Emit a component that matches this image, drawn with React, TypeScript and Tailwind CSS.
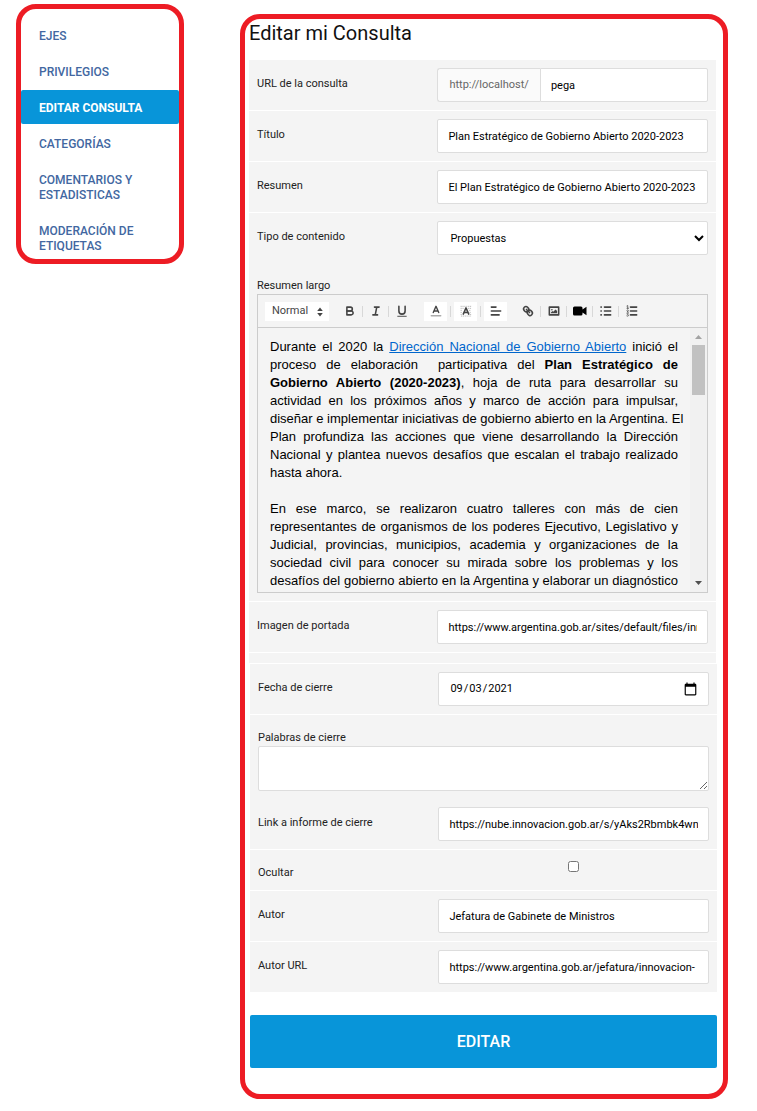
import { useState } from "react";
import type { ReactNode } from "react";

const navItems = [
  "Ejes",
  "Privilegios",
  "Editar consulta",
  "Categorías",
  "Comentarios y estadisticas",
  "Moderación de etiquetas",
];

const fieldClass =
  "block h-[34px] w-full min-w-0 rounded-[2px] border border-[#dddddd] bg-white px-[10px] text-[11px] text-black";

function Sidebar() {
  return (
    <aside className="mt-1 w-[168px] shrink-0 rounded-[20px] border-[5px] border-[#ed1c24] pt-[9px]">
      <nav className="flex flex-col gap-[2px]">
        {navItems.map((item) => (
          <a
            key={item}
            href="#"
            className={
              item === "Editar consulta"
                ? "rounded-[2px] bg-[#0895d9] pt-[11px] pr-5 pb-2 pl-[18px] text-[12px] leading-[15px] font-bold text-white uppercase"
                : "pt-[11px] pr-5 pb-2 pl-[18px] text-[12px] leading-[15px] font-medium text-[#4267a1] uppercase last:pb-[5px]"
            }
          >
            {item}
          </a>
        ))}
      </nav>
    </aside>
  );
}

function Row({
  id,
  label,
  last = false,
  children,
}: {
  id: string;
  label: string;
  last?: boolean;
  children: ReactNode;
}) {
  return (
    <div
      className={
        last
          ? "grid grid-cols-[2fr_3fr] px-2"
          : "grid grid-cols-[2fr_3fr] border-b border-white px-2"
      }
    >
      <label htmlFor={id} className="pt-4 leading-4">
        {label}
      </label>
      <div className="min-w-0 py-2">{children}</div>
    </div>
  );
}

function TextRow({ id, label, value, last }: { id: string; label: string; value: string; last?: boolean }) {
  return (
    <Row id={id} label={label} last={last}>
      <input id={id} type="text" defaultValue={value} className={fieldClass} />
    </Row>
  );
}

function Icon({ children }: { children: ReactNode }) {
  return (
    <svg
      viewBox="0 0 18 18"
      className="size-[14px]"
      fill="none"
      stroke="#444444"
      strokeWidth="2"
      strokeLinecap="round"
      strokeLinejoin="round"
      aria-hidden="true"
    >
      {children}
    </svg>
  );
}

function Tool({ label, children }: { label: string; children: ReactNode }) {
  return (
    <button type="button" aria-label={label} className="flex h-5 w-[25px] items-center justify-center">
      {children}
    </button>
  );
}

function PickerTool({ label, children }: { label: string; children: ReactNode }) {
  return (
    <button
      type="button"
      aria-label={label}
      className="flex h-[19px] w-[23px] items-center justify-center bg-white"
    >
      {children}
    </button>
  );
}

function Divider() {
  return <span className="h-[11px] w-px bg-[#d8d8d8]" />;
}

function Toolbar() {
  return (
    <div className="flex h-[33px] items-center overflow-hidden border-b border-[#cccccc] pl-[7px]">
      <button
        type="button"
        className="flex h-[19px] w-16 items-center justify-between bg-white pt-px pr-[5px] pl-[7px] text-[11px] text-[#444444]"
      >
        Normal
        <svg viewBox="0 0 8 10" className="h-[10px] w-2" fill="#444444" aria-hidden="true">
          <path d="M4 0.5 6.8 4H1.2ZM4 9.5 1.2 6h5.6Z" />
        </svg>
      </button>
      <div className="ml-2 flex items-center">
        <Tool label="Negrita">
          <Icon>
            <path d="M5,4H9.5A2.5,2.5,0,0,1,12,6.5v0A2.5,2.5,0,0,1,9.5,9H5V4Z" />
            <path d="M5,9h5.5A2.5,2.5,0,0,1,13,11.5v0A2.5,2.5,0,0,1,10.5,14H5V9Z" />
          </Icon>
        </Tool>
        <Divider />
        <Tool label="Cursiva">
          <Icon>
            <path d="M7,4h6M5,14h6M8,14L10,4" />
          </Icon>
        </Tool>
        <Divider />
        <Tool label="Subrayado">
          <Icon>
            <path d="M5,3V9a4.012,4.012,0,0,0,4,4H9a4.012,4.012,0,0,0,4-4V3" />
            <path d="M3.5,15.8h11" strokeWidth="1.2" />
          </Icon>
        </Tool>
      </div>
      <div className="ml-[10px] flex items-center gap-[3px]">
        <PickerTool label="Color de texto">
          <Icon>
            <path d="M3,15h12" opacity="0.45" />
            <path d="M5.5,11L9,3L12.5,11M6.4,9h5.2" strokeWidth="1.8" />
          </Icon>
        </PickerTool>
        <Divider />
        <PickerTool label="Color de fondo">
          <Icon>
            <path
              d="M2.5,3h13M2.5,5.6h3.5M12,5.6h3.5M2.5,8.2h2M13.5,8.2h2M2.5,10.8h1.5M14,10.8h1.5M2.5,13.4h1M14.5,13.4h1M3,15.5h12"
              strokeWidth="1"
              strokeDasharray="0.6 1.8"
              opacity="0.45"
            />
            <path d="M5.5,13L9,5L12.5,13M6.4,11h5.2" />
          </Icon>
        </PickerTool>
        <Divider />
        <PickerTool label="Alineación">
          <Icon>
            <path d="M3,9H15M3,14H13M3,4H9" />
          </Icon>
        </PickerTool>
      </div>
      <div className="ml-2 flex items-center">
        <Tool label="Enlace">
          <Icon>
            <path d="M7,7L11,11" />
            <path d="M8.9,4.577a3.476,3.476,0,0,1,.36,4.679A3.476,3.476,0,0,1,4.577,8.9C3.185,7.5,2.035,6.4,4.217,4.217S7.5,3.185,8.9,4.577Z" />
            <path d="M13.423,9.1a3.476,3.476,0,0,0-4.679-.36,3.476,3.476,0,0,0,.36,4.679c1.392,1.392,2.5,2.542,4.679.36S14.815,10.5,13.423,9.1Z" />
          </Icon>
        </Tool>
        <Divider />
        <Tool label="Imagen">
          <Icon>
            <rect x="3" y="4" width="12" height="10" />
            <circle cx="6.3" cy="7.3" r="1" fill="#444444" stroke="none" />
            <path d="M5,12V11L7,9L8,10L11,7L13,9V12Z" fill="#444444" stroke="none" />
          </Icon>
        </Tool>
        <Divider />
        <Tool label="Video">
          <svg viewBox="0 0 14 10" className="h-[10px] w-[14px]" fill="#000000" aria-hidden="true">
            <path d="M1.5,0.5H8A1.5,1.5,0,0,1,9.5,2V3.6L13.5,0.8V9.2L9.5,6.4V8A1.5,1.5,0,0,1,8,9.5H1.5A1.5,1.5,0,0,1,0,8V2A1.5,1.5,0,0,1,1.5,0.5Z" />
          </svg>
        </Tool>
        <Divider />
        <Tool label="Lista">
          <Icon>
            <path d="M7,4H15M7,9H15M7,14H15M2.5,4H3M2.5,9H3M2.5,14H3" />
          </Icon>
        </Tool>
        <Divider />
        <Tool label="Lista numerada">
          <Icon>
            <path d="M7,4H15M7,9H15M7,14H15" />
            <path
              d="M2.5,2.5L3.5,2V5.5M2.5,5.5H4.5M2.4,8Q3.5,7 4.3,8Q4.3,8.8 2.5,10.5H4.5M2.5,12.5H4.3L3.4,13.8Q4.6,14 4.3,15.2Q3.5,16 2.4,15.4"
              strokeWidth="1"
            />
          </Icon>
        </Tool>
      </div>
    </div>
  );
}

function Editor() {
  return (
    <div className="h-[299px] overflow-hidden border border-[#cccccc]">
      <Toolbar />
      <div className="flex h-[264px]">
        <div
          role="textbox"
          aria-multiline="true"
          aria-labelledby="resumen-largo"
          className="min-w-0 flex-1 overflow-hidden px-3 pt-[10px] text-justify font-['Liberation_Sans',Arial,sans-serif] text-[13px] leading-[18px] text-black"
        >
          <p className="mb-[18px] whitespace-pre-wrap">
            Durante el 2020 la{" "}
            <a href="#" className="text-[#0066cc] underline">
              Dirección Nacional de Gobierno Abierto
            </a>
            {" inició el proceso de elaboración  participativa del "}
            <strong>Plan Estratégico de Gobierno Abierto (2020-2023)</strong>, hoja de ruta para desarrollar su
            actividad en los próximos años y marco de acción para impulsar,{" "}
            <span className="whitespace-nowrap">
              diseñar e implementar iniciativas de gobierno abierto en la Argentina. El
            </span>{" "}
            Plan profundiza las acciones que viene desarrollando la Dirección Nacional y plantea nuevos desafíos que
            escalan el trabajo realizado hasta ahora.
          </p>
          <p className="[text-align-last:justify]">
            En ese marco, se realizaron cuatro talleres con más de cien representantes de organismos de los poderes
            Ejecutivo, Legislativo y Judicial, provincias, municipios, academia y organizaciones de la sociedad civil
            para conocer su mirada sobre los problemas y los desafíos del gobierno abierto en la Argentina y elaborar
            un diagnóstico
          </p>
        </div>
        <div className="flex w-[17px] flex-col items-center bg-[#f1f1f1]" aria-hidden="true">
          <svg viewBox="0 0 17 17" className="size-[17px] shrink-0" fill="#a3a3a3">
            <path d="M8.5 7 12 11H5Z" />
          </svg>
          <div className="h-[50px] w-[13px] bg-[#c1c1c1]" />
          <svg viewBox="0 0 17 17" className="mt-auto size-[17px] shrink-0" fill="#505050">
            <path d="M8.5 10 5 6h7Z" />
          </svg>
        </div>
      </div>
    </div>
  );
}

export default function App() {
  const [hidden, setHidden] = useState(false);

  return (
    <div className="flex items-start gap-14 bg-white pr-[29px] pb-3 pl-4 font-[Roboto,sans-serif] text-[11px] text-[#222222]">
      <Sidebar />
      <main className="mt-[14px] min-w-0 flex-1 rounded-[20px] border-[5px] border-[#ed1c24] pb-[26px]">
        <h1 className="h-[41px] pl-1 text-[20px] leading-7 text-[#111111]">Editar mi Consulta</h1>
        <form onSubmit={(e) => e.preventDefault()}>
          <div className="mr-[7px] ml-1 bg-[#f4f4f4]">
            <Row id="url" label="URL de la consulta">
              <div className="flex">
                <span className="flex h-[34px] shrink-0 items-center rounded-l-[3px] border border-r-0 border-[#dddddd] bg-[#fafafa] px-[11px] text-[#666666]">
                  http://localhost/
                </span>
                <input
                  id="url"
                  type="text"
                  defaultValue="pega"
                  className="h-[34px] min-w-0 flex-1 rounded-r-[2px] border border-[#dddddd] bg-white px-[10px] text-[11px] text-black"
                />
              </div>
            </Row>
            <TextRow id="titulo" label="Título" value="Plan Estratégico de Gobierno Abierto 2020-2023" />
            <TextRow
              id="resumen"
              label="Resumen"
              value="El Plan Estratégico de Gobierno Abierto 2020-2023"
            />
            <Row id="tipo" label="Tipo de contenido" last>
              <select
                id="tipo"
                className="block h-[34px] w-full rounded-[2px] border border-[#dddddd] bg-white pr-[2px] pl-2 text-[11px] text-black"
              >
                <option>Propuestas</option>
              </select>
            </Row>
            <div className="border-b border-white px-2 pt-[15px] pb-2">
              <span id="resumen-largo" className="block leading-4">
                Resumen largo
              </span>
              <Editor />
            </div>
            <TextRow
              id="imagen"
              label="Imagen de portada"
              value="https://www.argentina.gob.ar/sites/default/files/innovacion.jpg"
            />
            <div className="h-[11px] border-b border-white" />
          </div>
          <div className="mr-[6px] ml-[5px] bg-[#f4f4f4]">
            <Row id="fecha" label="Fecha de cierre">
              <input
                id="fecha"
                type="date"
                defaultValue="2021-09-03"
                className="block h-[34px] w-full min-w-0 rounded-[2px] border border-[#dddddd] bg-white px-[10px] text-[11px] text-black [&::-webkit-calendar-picker-indicator]:size-[15px] [&::-webkit-calendar-picker-indicator]:bg-contain [&::-webkit-calendar-picker-indicator]:p-0"
              />
            </Row>
            <div className="px-2 pt-[15px] pb-2">
              <label htmlFor="palabras" className="block leading-4">
                Palabras de cierre
              </label>
              <textarea
                id="palabras"
                className="block h-[45px] w-full resize rounded-[2px] border border-[#dddddd] bg-white px-[10px] py-2 text-[11px] text-black"
              />
            </div>
            <TextRow
              id="informe"
              label="Link a informe de cierre"
              value="https://nube.innovacion.gob.ar/s/yAks2Rbmbk4wn"
            />
            <div className="grid h-[41px] grid-cols-[2fr_3fr] border-b border-white px-2">
              <label htmlFor="ocultar" className="pt-[15px] leading-4">
                Ocultar
              </label>
              <div className="flex justify-center pt-[11px]">
                <input
                  id="ocultar"
                  type="checkbox"
                  checked={hidden}
                  onChange={(e) => setHidden(e.target.checked)}
                  className="size-[11px]"
                />
              </div>
            </div>
            <TextRow id="autor" label="Autor" value="Jefatura de Gabinete de Ministros" />
            <TextRow
              id="autor-url"
              label="Autor URL"
              value="https://www.argentina.gob.ar/jefatura/innovacion-"
              last
            />
          </div>
          <div className="mt-[23px] mr-[6px] ml-[5px]">
            <button
              type="submit"
              className="h-[53px] w-full rounded-[2px] bg-[#0895d9] text-[16px] font-medium text-white uppercase"
            >
              Editar
            </button>
          </div>
        </form>
      </main>
    </div>
  );
}
